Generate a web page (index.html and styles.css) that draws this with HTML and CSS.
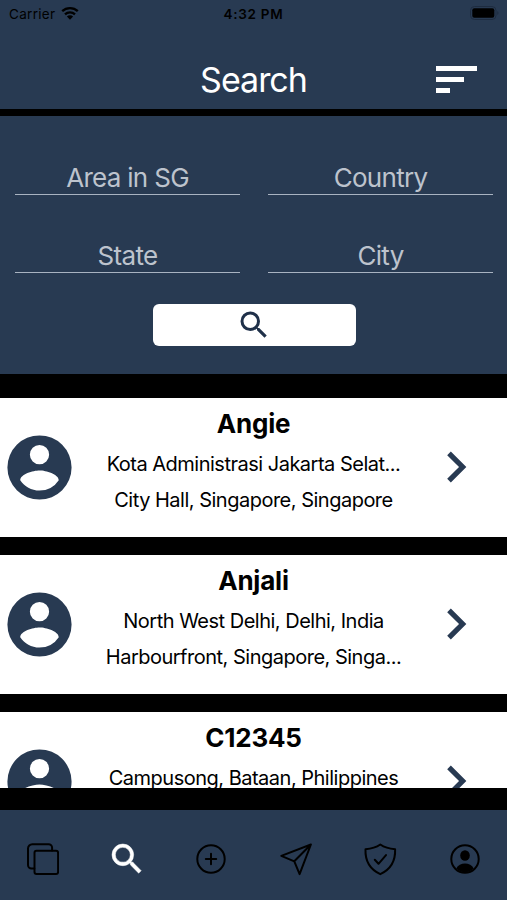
FILE: index.html
```
<!DOCTYPE html>
<html lang="en">
<head>
    <meta charset="UTF-8">
    <meta name="viewport" content="width=device-width, initial-scale=1.0">
    <title>Search</title>
    <link rel="stylesheet" href="styles.css">
</head>
<body>
    <svg class="symbols">
        <symbol id="account" viewBox="0 0 24 24">
            <path d="M12 2a10 10 0 1 0 0 20 10 10 0 0 0 0-20zm0 3a3 3 0 1 1 0 6 3 3 0 0 1 0-6zm0 14.2c-2.5 0-4.71-1.28-6-3.22.03-1.99 4-3.08 6-3.08s5.97 1.09 6 3.08a7.2 7.2 0 0 1-6 3.22z"/>
        </symbol>
        <symbol id="chevron" viewBox="0 0 24 24">
            <path d="M8.59 16.58L13.17 12 8.59 7.41 10 6l6 6-6 6z"/>
        </symbol>
        <symbol id="search" viewBox="0 0 24 24">
            <path d="M15.5 14h-.79l-.28-.27A6.47 6.47 0 0 0 16 9.5 6.5 6.5 0 1 0 9.5 16c1.61 0 3.09-.59 4.23-1.57l.27.28v.79l5 4.99L20.49 19l-4.99-5zm-6 0a4.5 4.5 0 1 1 0-9 4.5 4.5 0 0 1 0 9z"/>
        </symbol>
    </svg>

    <div class="app">
        <header class="header">
            <div class="status-bar">
                <div class="carrier">
                    <span>Carrier</span>
                    <svg class="wifi" viewBox="0 0 18 14">
                        <path class="wave" d="M1.2 5.2a11.2 11.2 0 0 1 15.6 0M4 8.3a7.2 7.2 0 0 1 10 0"/>
                        <path d="M9 13.8L5.9 10.6a4.4 4.4 0 0 1 6.2 0z"/>
                    </svg>
                </div>
                <div class="time">4:32 PM</div>
                <div class="battery-wrap">
                    <svg class="battery" viewBox="0 0 29 14">
                        <rect class="shell" x="0.5" y="0.5" width="25.5" height="13" rx="4"/>
                        <rect x="2.3" y="2.3" width="22" height="9.4" rx="2"/>
                        <path class="cap" d="M27.3 5c1.6.7 1.6 3.3 0 4z"/>
                    </svg>
                </div>
            </div>
            <div class="title-bar">
                <h1>Search</h1>
                <button class="sort-button" aria-label="Sort">
                    <span class="line"></span>
                    <span class="line medium"></span>
                    <span class="line short"></span>
                </button>
            </div>
        </header>

        <form class="search-form">
            <div class="fields">
                <input type="text" placeholder="Area in SG">
                <input type="text" placeholder="Country">
                <input type="text" placeholder="State">
                <input type="text" placeholder="City">
            </div>
            <button class="search-button" type="button" aria-label="Search">
                <svg><use href="#search"/></svg>
            </button>
        </form>

        <main class="results">
            <div class="card">
                <svg class="avatar"><use href="#account"/></svg>
                <div class="info">
                    <h2>Angie</h2>
                    <p>Kota Administrasi Jakarta Selat...</p>
                    <p>City Hall, Singapore, Singapore</p>
                </div>
                <svg class="chevron"><use href="#chevron"/></svg>
            </div>
            <div class="card">
                <svg class="avatar"><use href="#account"/></svg>
                <div class="info">
                    <h2>Anjali</h2>
                    <p>North West Delhi, Delhi, India</p>
                    <p>Harbourfront, Singapore, Singa...</p>
                </div>
                <svg class="chevron"><use href="#chevron"/></svg>
            </div>
            <div class="card">
                <svg class="avatar"><use href="#account"/></svg>
                <div class="info">
                    <h2>C12345</h2>
                    <p>Campusong, Bataan, Philippines</p>
                </div>
                <svg class="chevron"><use href="#chevron"/></svg>
            </div>
        </main>

        <nav class="tab-bar">
            <a class="tab">
                <svg viewBox="-1.3 -0.5 34 34">
                    <rect x="8.2" y="8.2" width="23.6" height="23.4" rx="2"/>
                    <path d="M25.8 8V5.2a3.500 3.500 0 0 0-3.500-3.500H6A4.300 4.300 0 0 0 1.700 6v16.500A3.500 3.500 0 0 0 5.200 26H8"/>
                </svg>
            </a>
            <a class="tab active">
                <svg><use href="#search"/></svg>
            </a>
            <a class="tab">
                <svg viewBox="0 0 34 34">
                    <circle cx="17" cy="17" r="13.7"/>
                    <path d="M17 11.8v10.400M11.800 17h10.400"/>
                </svg>
            </a>
            <a class="tab">
                <svg viewBox="-0.6 -0.3 34 34">
                    <path d="M31.300 2.200L1.700 13.600l13 5.400 5.300 12.900zM31.300 2.200L14.700 19"/>
                </svg>
            </a>
            <a class="tab">
                <svg viewBox="-0.3 -0.3 34 34">
                    <path d="M17 2.200c4 2.800 9 4.300 14.800 4.800.5 12-4.300 20-14.800 24.900C6.500 27 1.700 19 2.200 7 8 6.500 13 5 17 2.200z"/>
                    <path d="M11.500 17.500l3.700 4 7.500-8.700"/>
                </svg>
            </a>
            <a class="tab">
                <svg viewBox="0 0 34 34">
                    <circle cx="17" cy="17" r="13.700"/>
                    <ellipse class="solid" cx="17" cy="13.500" rx="4.800" ry="5.300"/>
                    <path class="solid" d="M8.300 26.500c1.500-3.300 5-5 8.700-5s7.200 1.700 8.700 5A13.500 13.500 0 0 1 17 30.500a13.500 13.500 0 0 1-8.700-4z"/>
                </svg>
            </a>
        </nav>
    </div>
</body>
</html>
```
FILE: styles.css
```
* {
    box-sizing: border-box;
}
body {
    margin: 0;
    background-color: #000;
    font-family: Inter, 'Liberation Sans', sans-serif;
    color: #000;
}
h1, h2, p {
    margin: 0;
    font-weight: 400;
}
button {
    padding: 0;
    border: 0;
    background: none;
}
.symbols {
    display: none;
}
.app {
    display: flex;
    flex-direction: column;
    height: 900px;
    overflow: hidden;
}

/* Header */
.header {
    flex: none;
    height: 109px;
    background-color: #283a52;
}
.status-bar {
    display: grid;
    grid-template-columns: 1fr auto 1fr;
    align-items: center;
    height: 28px;
    padding: 0 8px;
    font-size: 13.5px;
}
.carrier {
    display: flex;
    align-items: center;
    gap: 6px;
    padding-left: 1px;
    letter-spacing: 0.3px;
}
.wifi {
    width: 18px;
    height: 14px;
    margin-top: -3px;
}
.wave {
    fill: none;
    stroke: #000;
    stroke-width: 2.3;
}
.time {
    font-weight: 600;
    letter-spacing: 0.7px;
}
.battery-wrap {
    display: flex;
    justify-content: flex-end;
}
.battery {
    width: 29px;
    height: 14px;
    margin-top: -2px;
}
.shell {
    fill: none;
    stroke: #1e2c40;
}
.cap {
    fill: #1e2c40;
}
.title-bar {
    display: grid;
    grid-template-columns: 1fr auto 1fr;
    align-items: center;
    height: 102px;
    padding: 0 30px;
}
.title-bar h1 {
    grid-column: 2;
    color: #fff;
    font-size: 34px;
    letter-spacing: -1px;
}
.sort-button {
    display: flex;
    flex-direction: column;
    justify-self: end;
    gap: 6px;
}
.line {
    width: 41px;
    height: 5px;
    background-color: #fff;
}
.line.medium {
    width: 28px;
}
.line.short {
    width: 14px;
}

/* Search form */
.search-form {
    flex: none;
    display: flex;
    flex-direction: column;
    align-items: center;
    height: 258px;
    margin-top: 7px;
    padding: 40px 14px 0 15px;
    background-color: #283a52;
}
.fields {
    display: grid;
    grid-template-columns: 1fr 1fr;
    gap: 39px 28px;
    width: 100%;
}
.fields input {
    width: 100%;
    height: 39px;
    padding: 4px 0 0;
    border: 0;
    border-bottom: 1px solid #a9b3c1;
    border-radius: 0;
    background: none;
    font-family: inherit;
    font-size: 26px;
    letter-spacing: -0.7px;
    text-align: center;
    outline: none;
}
.fields input::placeholder {
    color: #bdc3cd;
    opacity: 1;
}
.search-button {
    display: flex;
    align-items: center;
    justify-content: center;
    width: 203px;
    height: 42px;
    margin-top: 31px;
    border-radius: 6px;
    background-color: #fff;
}
.search-button svg {
    width: 36px;
    height: 36px;
    fill: #1f3049;
}

/* Results */
.results {
    flex: none;
    display: flex;
    flex-direction: column;
    gap: 17.6px;
    height: 390.5px;
    margin-top: 23.5px;
    overflow: hidden;
}
.card {
    flex: none;
    display: grid;
    grid-template-columns: 78px 1fr 78px;
    align-items: center;
    height: 139.5px;
    background-color: #fff;
}
.avatar {
    width: 77px;
    height: 77px;
    margin-left: 1px;
    fill: #283a52;
}
.info {
    align-self: start;
    padding-top: 8px;
    text-align: center;
    white-space: nowrap;
}
.info h2 {
    margin-bottom: 4px;
    font-size: 26px;
    font-weight: 700;
    line-height: 36px;
    letter-spacing: -0.2px;
}
.info p {
    font-size: 20px;
    line-height: 36.5px;
    letter-spacing: -0.5px;
}
.chevron {
    width: 62px;
    height: 62px;
    margin-left: -4px;
    fill: #283a52;
}

/* Tab bar */
.tab-bar {
    flex: none;
    display: grid;
    grid-template-columns: repeat(6, 1fr);
    height: 90px;
    margin-top: 22px;
    background-color: #283a52;
}
.tab {
    display: flex;
    align-items: center;
    justify-content: center;
    padding-top: 7px;
}
.tab svg {
    width: 34px;
    height: 34px;
    fill: none;
    stroke: #000;
    stroke-width: 2;
    stroke-linecap: round;
    stroke-linejoin: round;
}
.tab .solid {
    fill: #000;
    stroke: none;
}
.tab.active svg {
    width: 40px;
    height: 40px;
    fill: #fff;
    stroke: #fff;
    stroke-width: 0.3;
}
```
